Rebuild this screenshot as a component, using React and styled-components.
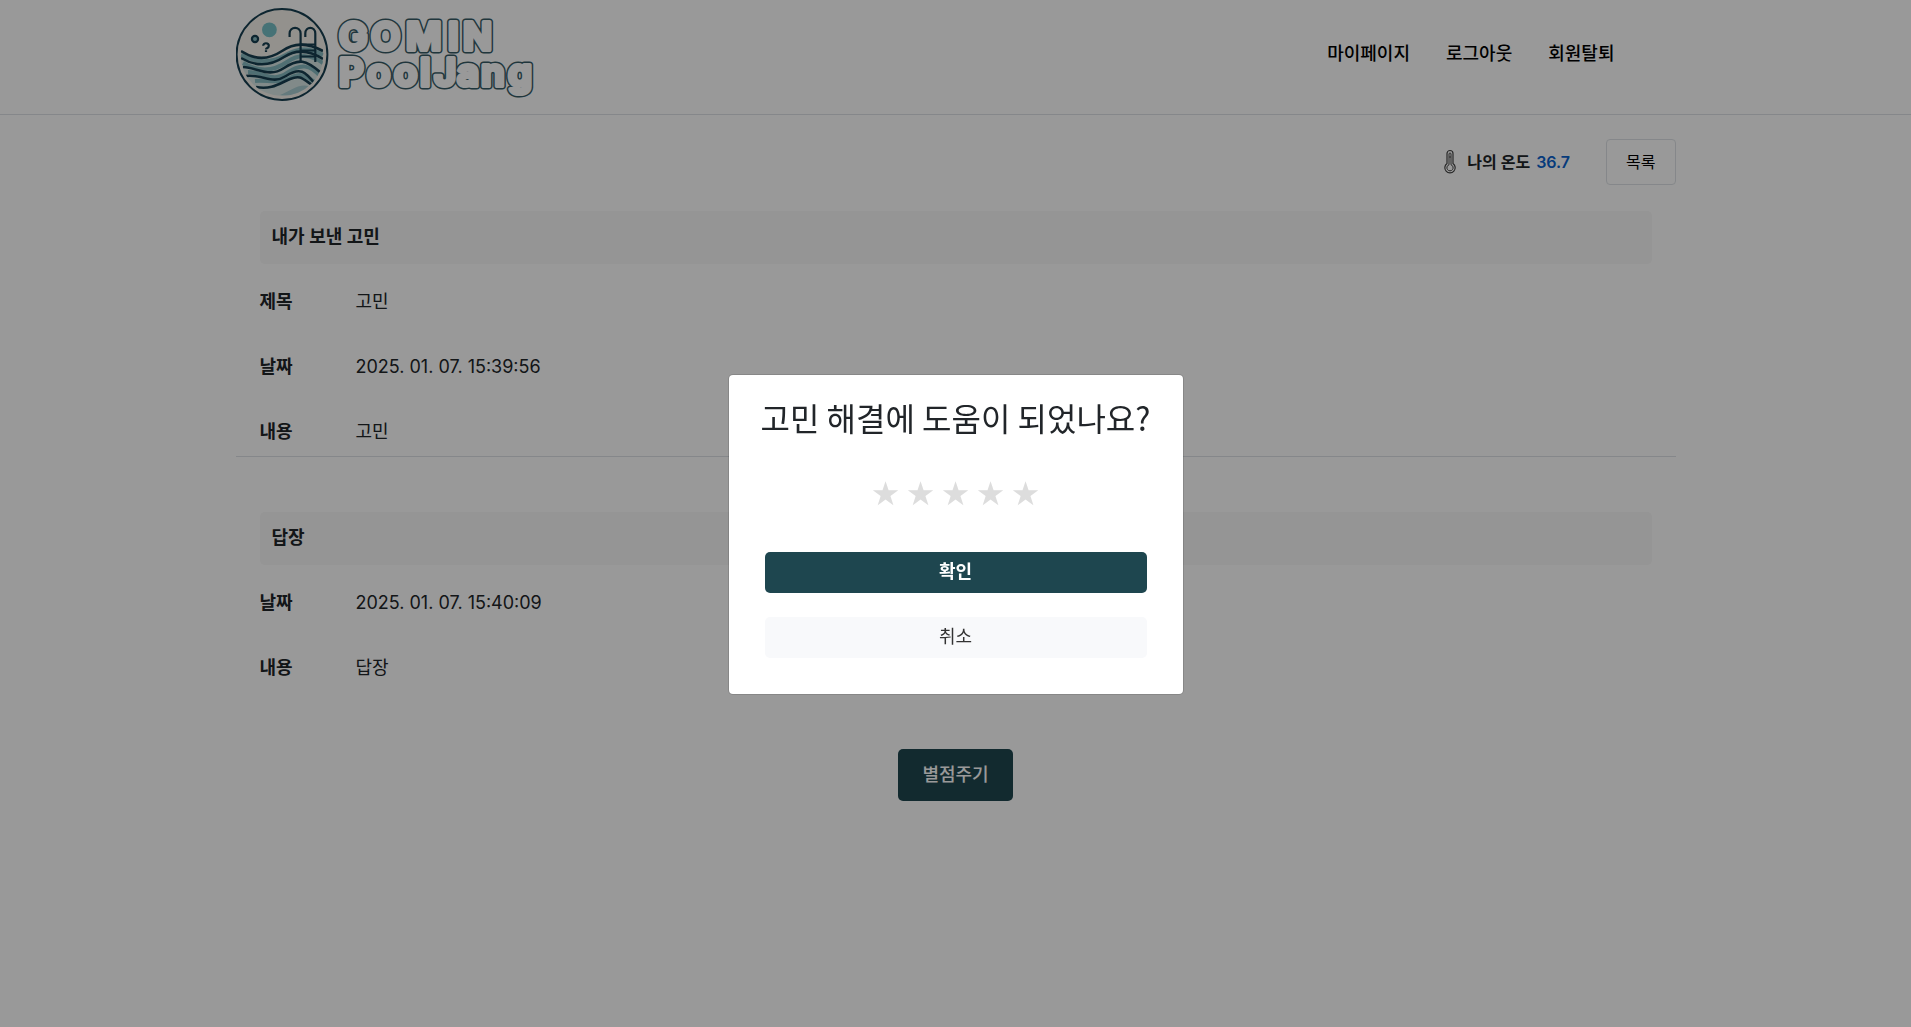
import React, { useState } from "react";
import styled, { createGlobalStyle, css } from "styled-components";

const GlobalStyle = createGlobalStyle`
  * { box-sizing: border-box; }
  body {
    margin: 0;
    background: #fff;
    color: #212529;
    font-family: Inter, "Noto Sans CJK KR", sans-serif;
    font-size: 18px;
    line-height: 28px;
  }
  button, input { font: inherit; color: inherit; }
`;

const Header = styled.header`
  border-bottom: 1px solid #dee2e6;
`;

const Container = styled.div`
  max-width: 1440px;
  margin: 0 auto;
`;

const HeaderInner = styled(Container)`
  display: flex;
  align-items: center;
  justify-content: space-between;
  min-height: 114px;
`;

const LogoLink = styled.a`
  display: flex;
  svg { display: block; }
`;

const Nav = styled.nav`
  display: flex;
  gap: 36px;
  padding: 0 61px 6px 0;
`;

const NavLink = styled.a`
  color: #000;
  font-weight: 500;
  text-decoration: none;
`;

const Toolbar = styled.div`
  display: flex;
  align-items: center;
  justify-content: flex-end;
  gap: 36px;
  padding: 24px 0;
  font-size: 16px;
`;

const Temperature = styled.div`
  display: flex;
  align-items: center;
  gap: 6px;
  font-weight: 600;
`;

const Degree = styled.strong`
  color: #0b63ce;
  font-weight: 600;
`;

const ListButton = styled.button`
  height: 46px;
  padding: 0 19px;
  border: 1px solid #dee2e6;
  border-radius: 4px;
  background: #fff;
  color: #000;
`;

const Section = styled.section`
  padding: 2px 24px 10px;
  ${(p) => p.$divided && css`border-bottom: 1px solid #dee2e6;`}
  & + & { padding-top: 55px; }
`;

const SectionTitle = styled.h2`
  margin: 0 0 24px;
  padding: 12px 12px 13px;
  border-radius: 5px;
  background: #f8f8f8;
  font-size: 18px;
  font-weight: 600;
  line-height: 28px;
`;

const Details = styled.dl`
  display: grid;
  grid-template-columns: 96px 1fr;
  row-gap: 37px;
  margin: 0;
`;

const Term = styled.dt`
  font-weight: 700;
`;

const Value = styled.dd`
  margin: 0;
`;

const Actions = styled.div`
  display: flex;
  justify-content: center;
  padding-top: 57px;
`;

const PrimaryButton = styled.button`
  height: ${(p) => (p.$tall ? 52 : 41)}px;
  padding: ${(p) => (p.$tall ? "0 24px" : "0 24px 2px")};
  border: 0;
  border-radius: 5px;
  background: #1e464f;
  color: #fff;
  font-weight: ${(p) => (p.$tall ? 500 : 700)};
`;

const CancelButton = styled(PrimaryButton)`
  background: #f8f9fb;
  color: #333;
  font-weight: 400;
`;

const Backdrop = styled.div`
  position: fixed;
  inset: 0;
  display: flex;
  align-items: center;
  justify-content: center;
  padding-top: 42px;
  background: rgba(0, 0, 0, 0.4);
`;

const Dialog = styled.form`
  width: 456px;
  padding: 18px 24px 36px;
  border: 1px solid rgba(0, 0, 0, 0.12);
  border-radius: 5px;
  background: #fff;
  background-clip: padding-box;
`;

const DialogTitle = styled.h1`
  margin: 0;
  font-family: "Noto Sans CJK KR", sans-serif;
  font-size: 32px;
  font-weight: 400;
  line-height: 48px;
  text-align: center;
  white-space: nowrap;
`;

const Stars = styled.fieldset`
  display: flex;
  justify-content: center;
  gap: 5px;
  margin: 32px 0 37px;
  padding: 0;
  border: 0;
`;

const Star = styled.label`
  position: relative;
  width: 30px;
  color: ${(p) => (p.$on ? "#ffc107" : "#ddd")};
  font-family: "DejaVu Sans", sans-serif;
  font-size: 33px;
  line-height: 42px;
  text-align: center;
  cursor: pointer;

  input {
    position: absolute;
    inset: 0;
    margin: 0;
    opacity: 0;
  }
`;

const DialogActions = styled.div`
  display: flex;
  flex-direction: column;
  gap: 24px;
  padding: 0 12px;
`;

const Wordmark = styled.g`
  font-family: Inter, sans-serif;
  font-weight: 700;
  stroke-linejoin: round;
`;

function Logo() {
  return (
    <svg width="310" height="114" viewBox="0 0 310 114" role="img" aria-label="GOMIN PoolJang">
      <defs>
        <clipPath id="pool"><circle cx="46" cy="54.5" r="41.5" /></clipPath>
        <g id="wordmark">
          <text x="103 135 170 212 227" y="50" fontSize="38">GOMIN</text>
          <text x="103 131 158 184 198 221 245 272" y="86" fontSize="38">PoolJang</text>
        </g>
      </defs>
      <circle cx="46" cy="54.5" r="45.4" fill="#f6f2ec" stroke="#173f50" strokeWidth="2" />
      <g clipPath="url(#pool)" fill="none" stroke="#173f50" strokeWidth="2.6">
        <path d="M5 51C22 61 36 60 48 53S70 44 87 51V96H5Z" fill="#d8e6e4" stroke="none" />
        <path d="M5 55C24 65 38 62 50 55S75 48 87 55M7 63C24 73 38 71 51 62S75 55 87 63M12 72C28 72 37 83 51 73S74 65 84 76M19 81C32 80 42 84 54 78S68 76 79 82" stroke="#86bac0" strokeWidth="4" />
        <path d="M5 51C20 61 34 59 46 51S70 42 87 51M5 58C22 68 36 65 48 57S73 50 87 59M7 67C23 68 33 78 48 68S70 60 84 72M10 76C28 74 36 85 50 76S69 71 79 84M20 87C36 90 44 83 54 79S66 78 76 85" />
        <path d="M44 95C55 91 66 80 78 89L66 97Z" fill="#a7cbd0" stroke="none" />
      </g>
      <circle cx="33.4" cy="29.8" r="7.4" fill="#75bfc5" />
      <g fill="none" stroke="#173f50" strokeWidth="2.2">
        <circle cx="19" cy="39" r="3.1" fill="#86bac0" />
        <path d="M27.2 45.8C27.2 42.2 32.8 42.6 32.8 45.8S30 47.4 30 49.4M30 50.2V52" />
        <path d="M53.6 37V33.5C53.6 26 64.6 26 64.6 33.5V61M69.3 37V33.5C69.3 26 79.3 26 79.3 33.5V62M65 44.5H79M65 50.5H79M65 56.5H79" />
      </g>
      <Wordmark>
        <use href="#wordmark" fill="#365a65" stroke="#365a65" strokeWidth="7" />
        <use href="#wordmark" fill="#fff" stroke="#fff" strokeWidth="4" />
      </Wordmark>
    </svg>
  );
}

function Thermometer() {
  return (
    <svg width="20" height="26" viewBox="0 0 20 26" fill="none" stroke="#444" aria-hidden="true">
      <path d="M6 14.5V4.5a3 3 0 0 1 6 0v10a5.2 5.2 0 1 1-6 0Z" strokeWidth="1.2" />
      <path d="M8 15.8V5a1 1 0 0 1 2 0v10.8a3.1 3.1 0 1 1-2 0Z" />
      <path d="M8 8h2" />
    </svg>
  );
}

const worry = [["제목", "고민"], ["날짜", "2025. 01. 07. 15:39:56"], ["내용", "고민"]];
const reply = [["날짜", "2025. 01. 07. 15:40:09"], ["내용", "답장"]];

function Letter({ title, rows, divided }) {
  return (
    <Section $divided={divided}>
      <SectionTitle>{title}</SectionTitle>
      <Details>
        {rows.map(([term, value]) => (
          <React.Fragment key={term}>
            <Term>{term}</Term>
            <Value>{value}</Value>
          </React.Fragment>
        ))}
      </Details>
    </Section>
  );
}

export default function App() {
  const [rating, setRating] = useState(0);
  const [open, setOpen] = useState(true);

  return (
    <>
      <GlobalStyle />
      <Header>
        <HeaderInner>
          <LogoLink href="#home"><Logo /></LogoLink>
          <Nav>
            <NavLink href="#mypage">마이페이지</NavLink>
            <NavLink href="#logout">로그아웃</NavLink>
            <NavLink href="#withdraw">회원탈퇴</NavLink>
          </Nav>
        </HeaderInner>
      </Header>
      <Container as="main">
        <Toolbar>
          <Temperature>
            <Thermometer />
            <span>나의 온도</span>
            <Degree>36.7</Degree>
          </Temperature>
          <ListButton type="button">목록</ListButton>
        </Toolbar>
        <Letter title="내가 보낸 고민" rows={worry} divided />
        <Letter title="답장" rows={reply} />
        <Actions>
          <PrimaryButton type="button" $tall onClick={() => setOpen(true)}>별점주기</PrimaryButton>
        </Actions>
      </Container>
      {open && (
        <Backdrop>
          <Dialog
            role="dialog"
            aria-labelledby="rating-title"
            onSubmit={(e) => {
              e.preventDefault();
              setOpen(false);
            }}
          >
            <DialogTitle id="rating-title">고민 해결에 도움이 되었나요?</DialogTitle>
            <Stars aria-labelledby="rating-title">
              {[1, 2, 3, 4, 5].map((n) => (
                <Star key={n} $on={n <= rating}>
                  <input
                    type="radio"
                    name="rating"
                    aria-label={`${n}점`}
                    checked={rating === n}
                    onChange={() => setRating(n)}
                  />
                  ★
                </Star>
              ))}
            </Stars>
            <DialogActions>
              <PrimaryButton type="submit">확인</PrimaryButton>
              <CancelButton type="button" onClick={() => setOpen(false)}>취소</CancelButton>
            </DialogActions>
          </Dialog>
        </Backdrop>
      )}
    </>
  );
}
